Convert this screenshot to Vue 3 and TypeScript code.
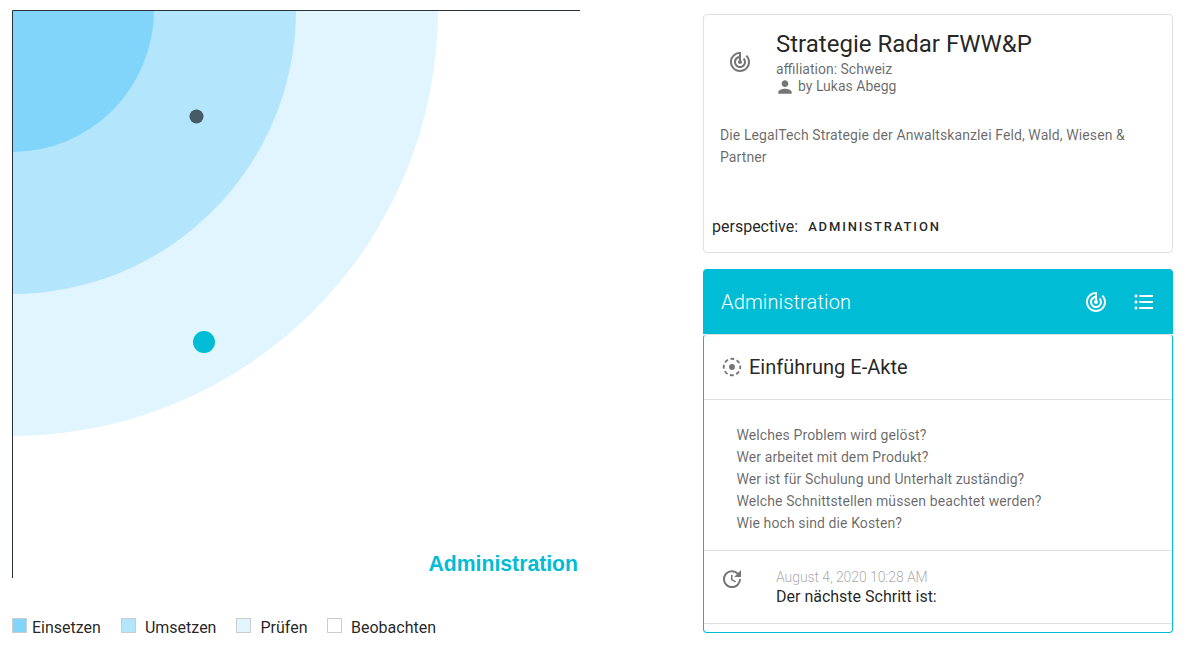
<script setup lang="ts">
const radii = [
  { r: 426, fill: '#E1F5FE' },
  { r: 284, fill: '#B3E5FC' },
  { r: 142, fill: '#81D4FA' },
]
const legend = [
  { label: 'Einsetzen', color: '#81D4FA', gap: 'g1' },
  { label: 'Umsetzen', color: '#B3E5FC', gap: 'g2' },
  { label: 'Prüfen', color: '#E1F5FE', gap: 'g2' },
  { label: 'Beobachten', color: '#FFFFFF', gap: 'g2' },
]
const questions = [
  'Welches Problem wird gelöst?',
  'Wer arbeitet mit dem Produkt?',
  'Wer ist für Schulung und Unterhalt zuständig?',
  'Welche Schnittstellen müssen beachtet werden?',
  'Wie hoch sind die Kosten?',
]
const radar = 'M19.07 4.93l-1.41 1.41C19.1 7.79 20 9.79 20 12c0 4.42-3.58 8-8 8s-8-3.58-8-8c0-4.08 3.05-7.44 7-7.93v2.02C8.16 6.57 6 9.03 6 12c0 3.31 2.69 6 6 6s6-2.69 6-6c0-1.66-.67-3.16-1.76-4.24l-1.41 1.41C15.55 9.9 16 10.9 16 12c0 2.21-1.79 4-4 4s-4-1.79-4-4c0-1.86 1.28-3.41 3-3.86v2.14c-.6.35-1 .98-1 1.72 0 1.1.9 2 2 2s2-.9 2-2c0-.74-.4-1.38-1-1.72V2h-1C6.48 2 2 6.48 2 12s4.48 10 10 10 10-4.48 10-10c0-2.76-1.12-5.26-2.93-7.07z'
</script>

<template>
  <div class="page">
    <section class="left">
      <svg class="chart" width="570" height="570" viewBox="0 0 570 570">
        <circle v-for="c in radii" :key="c.r" cx="0" cy="0" :r="c.r" :fill="c.fill" />
        <circle cx="184.5" cy="106.5" r="7" fill="#455A64" />
        <circle cx="192" cy="332" r="11" fill="#00BCD4" />
        <line x1="0.5" y1="0.5" x2="568" y2="0.5" stroke="#263238" stroke-width="1" />
        <line x1="0.5" y1="0.5" x2="0.5" y2="568" stroke="#263238" stroke-width="1" />
        <text x="566" y="561" text-anchor="end" class="chart-label">Administration</text>
      </svg>
      <div class="legend">
        <div v-for="l in legend" :key="l.label" class="legend-item" :class="l.gap">
          <span class="swatch" :style="{ background: l.color }"></span>
          <span>{{ l.label }}</span>
        </div>
      </div>
    </section>

    <aside class="right">
      <article class="card info">
        <header class="info-head">
          <svg class="icon grey radar-a" viewBox="0 0 24 24"><path :d="radar" /></svg>
          <div>
            <h1>Strategie Radar FWW&amp;P</h1>
            <p class="sub">affiliation: Schweiz</p>
            <p class="sub by">
              <svg class="person" viewBox="0 0 24 24"><path d="M12 12c2.21 0 4-1.79 4-4s-1.79-4-4-4-4 1.79-4 4 1.79 4 4 4zm0 2c-2.67 0-8 1.34-8 4v2h16v-2c0-2.66-5.33-4-8-4z" /></svg>
              by Lukas Abegg
            </p>
          </div>
        </header>
        <p class="desc">Die LegalTech Strategie der Anwaltskanzlei Feld, Wald, Wiesen &amp; Partner</p>
        <div class="persp">
          <span>perspective:</span>
          <span class="tag">ADMINISTRATION</span>
        </div>
      </article>

      <article class="panel">
        <header class="bar">
          <span class="bar-title">Administration</span>
          <svg class="icon white" viewBox="0 0 24 24"><path :d="radar" /></svg>
          <svg class="icon white" viewBox="0 0 24 24"><path d="M4 10.5c-.83 0-1.5.67-1.5 1.5s.67 1.5 1.5 1.5 1.5-.67 1.5-1.5-.67-1.5-1.5-1.5zm0-6c-.83 0-1.5.67-1.5 1.5S3.17 7.5 4 7.5 5.5 6.83 5.5 6 4.83 4.5 4 4.5zm0 12c-.83 0-1.5.68-1.5 1.5s.68 1.5 1.5 1.5 1.5-.68 1.5-1.5-.67-1.5-1.5-1.5zM7 19h14v-2H7v2zm0-6h14v-2H7v2zm0-8v2h14V5H7z" /></svg>
        </header>
        <div class="body">
          <div class="item-head">
            <svg class="icon-dash" viewBox="0 0 24 24">
              <circle cx="12" cy="12" r="9" fill="none" stroke="#757575" stroke-width="2" stroke-dasharray="4.2 2.87" stroke-dashoffset="2" />
              <circle cx="12" cy="12" r="3.2" fill="#757575" />
            </svg>
            <h2>Einführung E-Akte</h2>
          </div>
          <ul class="questions">
            <li v-for="q in questions" :key="q">{{ q }}</li>
          </ul>
          <div class="step">
            <svg class="icon grey" viewBox="0 0 24 24"><path d="M21 10.12h-6.78l2.74-2.82c-2.73-2.7-7.15-2.8-9.88-.1-2.73 2.71-2.73 7.08 0 9.79s7.15 2.71 9.88 0C18.32 15.65 19 14.08 19 12.1h2c0 1.98-.88 4.55-2.64 6.29-3.51 3.48-9.21 3.48-12.72 0-3.5-3.47-3.53-9.11-.02-12.58s9.14-3.47 12.65 0L21 3v7.12zM12.5 8v4.25l3.5 2.08-.72 1.21L11 13V8h1.5z" /></svg>
            <div>
              <div class="date">August 4, 2020 10:28 AM</div>
              <div class="next">Der nächste Schritt ist:</div>
            </div>
          </div>
        </div>
      </article>
    </aside>
  </div>
</template>

<style>
html, body { margin: 0; background: #fff; }
</style>

<style scoped>
.page {
  width: 1186px;
  height: 649px;
  overflow: hidden;
  display: flex;
  font-family: Roboto, "Liberation Sans", sans-serif;
  color: rgba(0, 0, 0, 0.87);
  box-sizing: border-box;
}
.left {
  width: 703px;
  flex: none;
  padding: 10px 0 0 12px;
  box-sizing: border-box;
}
.chart { display: block; }
.chart-label {
  font-family: "Liberation Sans", Roboto, sans-serif;
  font-weight: 700;
  font-size: 21.2px;
  fill: #00BCD4;
}
.legend {
  display: flex;
  margin-top: 38px;
  font-size: 16px;
  line-height: 20px;
  color: rgba(0, 0, 0, 0.87);
}
.legend-item { display: flex; align-items: center; margin-right: 20px; }
.legend-item:last-child { margin-left: -0.5px; }
.swatch {
  width: 13px;
  height: 13px;
  border: 1px solid #ccc;
  margin-right: 5px;
  margin-top: -5px;
  flex: none;
}
.legend-item.g2 .swatch { margin-right: 9px; }
.right { width: 470px; padding-top: 14px; }
.card {
  height: 239px;
  box-sizing: border-box;
  border: 1px solid #e0e0e0;
  border-radius: 4px;
  position: relative;
}
.info-head {
  display: flex;
  padding: 14px 16px 0;
}
.icon { width: 24px; height: 24px; flex: none; }
.icon.grey { fill: #757575; }
.icon.white { fill: #fff; }
.radar-a { margin: 21px 24px 0 8px; }
h1 {
  margin: 0;
  font-size: 24px;
  font-weight: 400;
  line-height: 30px;
}
.sub {
  margin: 0;
  font-size: 14px;
  line-height: 17px;
  color: rgba(0, 0, 0, 0.6);
}
.sub:first-of-type { margin-top: 2px; }
.by { display: flex; align-items: center; gap: 3px; }
.person { width: 20px; height: 20px; margin: -2px 0 -2px -1px; fill: #757575; }
.desc {
  margin: 29px 16px 0;
  font-size: 14px;
  letter-spacing: 0.0071em;
  line-height: 22px;
  color: rgba(0, 0, 0, 0.6);
}
.persp {
  margin: 49px 0 0 8px;
  font-size: 16px;
  line-height: 20px;
  display: flex;
  align-items: center;
  gap: 10px;
}
.tag {
  font-size: 13px;
  font-weight: 500;
  letter-spacing: 0.143em;
}
.panel { margin-top: 16px; }
.bar {
  height: 65px;
  background: #00BCD4;
  border-radius: 4px 4px 0 0;
  display: flex;
  align-items: center;
  padding: 0 17px 0 18px;
  gap: 24px;
  box-sizing: border-box;
  color: #fff;
}
.bar-title {
  flex: 1;
  font-size: 20px;
  font-weight: 300;
  letter-spacing: 0.15px;
}
.body {
  height: 299px;
  box-sizing: border-box;
  border: 1px solid #00BCD4;
  border-top-color: #e0e0e0;
  border-radius: 4px;
}
.item-head {
  height: 64px;
  display: flex;
  align-items: center;
  padding-left: 17px;
  gap: 6px;
  border-bottom: 1px solid #e0e0e0;
}
.icon-dash { width: 22px; height: 22px; flex: none; }
h2 { margin: 0; font-size: 20px; font-weight: 400; }
.questions {
  list-style: none;
  margin: 0;
  padding: 24px 0 16px 32.5px;
  height: 151px;
  box-sizing: border-box;
  font-size: 14px;
  letter-spacing: 0.0071em;
  line-height: 22px;
  color: rgba(0, 0, 0, 0.6);
  border-bottom: 1px solid #e0e0e0;
}
.step {
  height: 73px;
  display: flex;
  box-sizing: border-box;
  padding: 16px 0 0 16px;
  border-bottom: 1px solid #e0e0e0;
}
.step .icon { margin-right: 32px; }
.date {
  font-size: 14px;
  font-weight: 300;
  letter-spacing: -0.08px;
  line-height: 20px;
  color: rgba(0, 0, 0, 0.38);
}
.next { font-size: 16px; line-height: 20px; }
</style>
